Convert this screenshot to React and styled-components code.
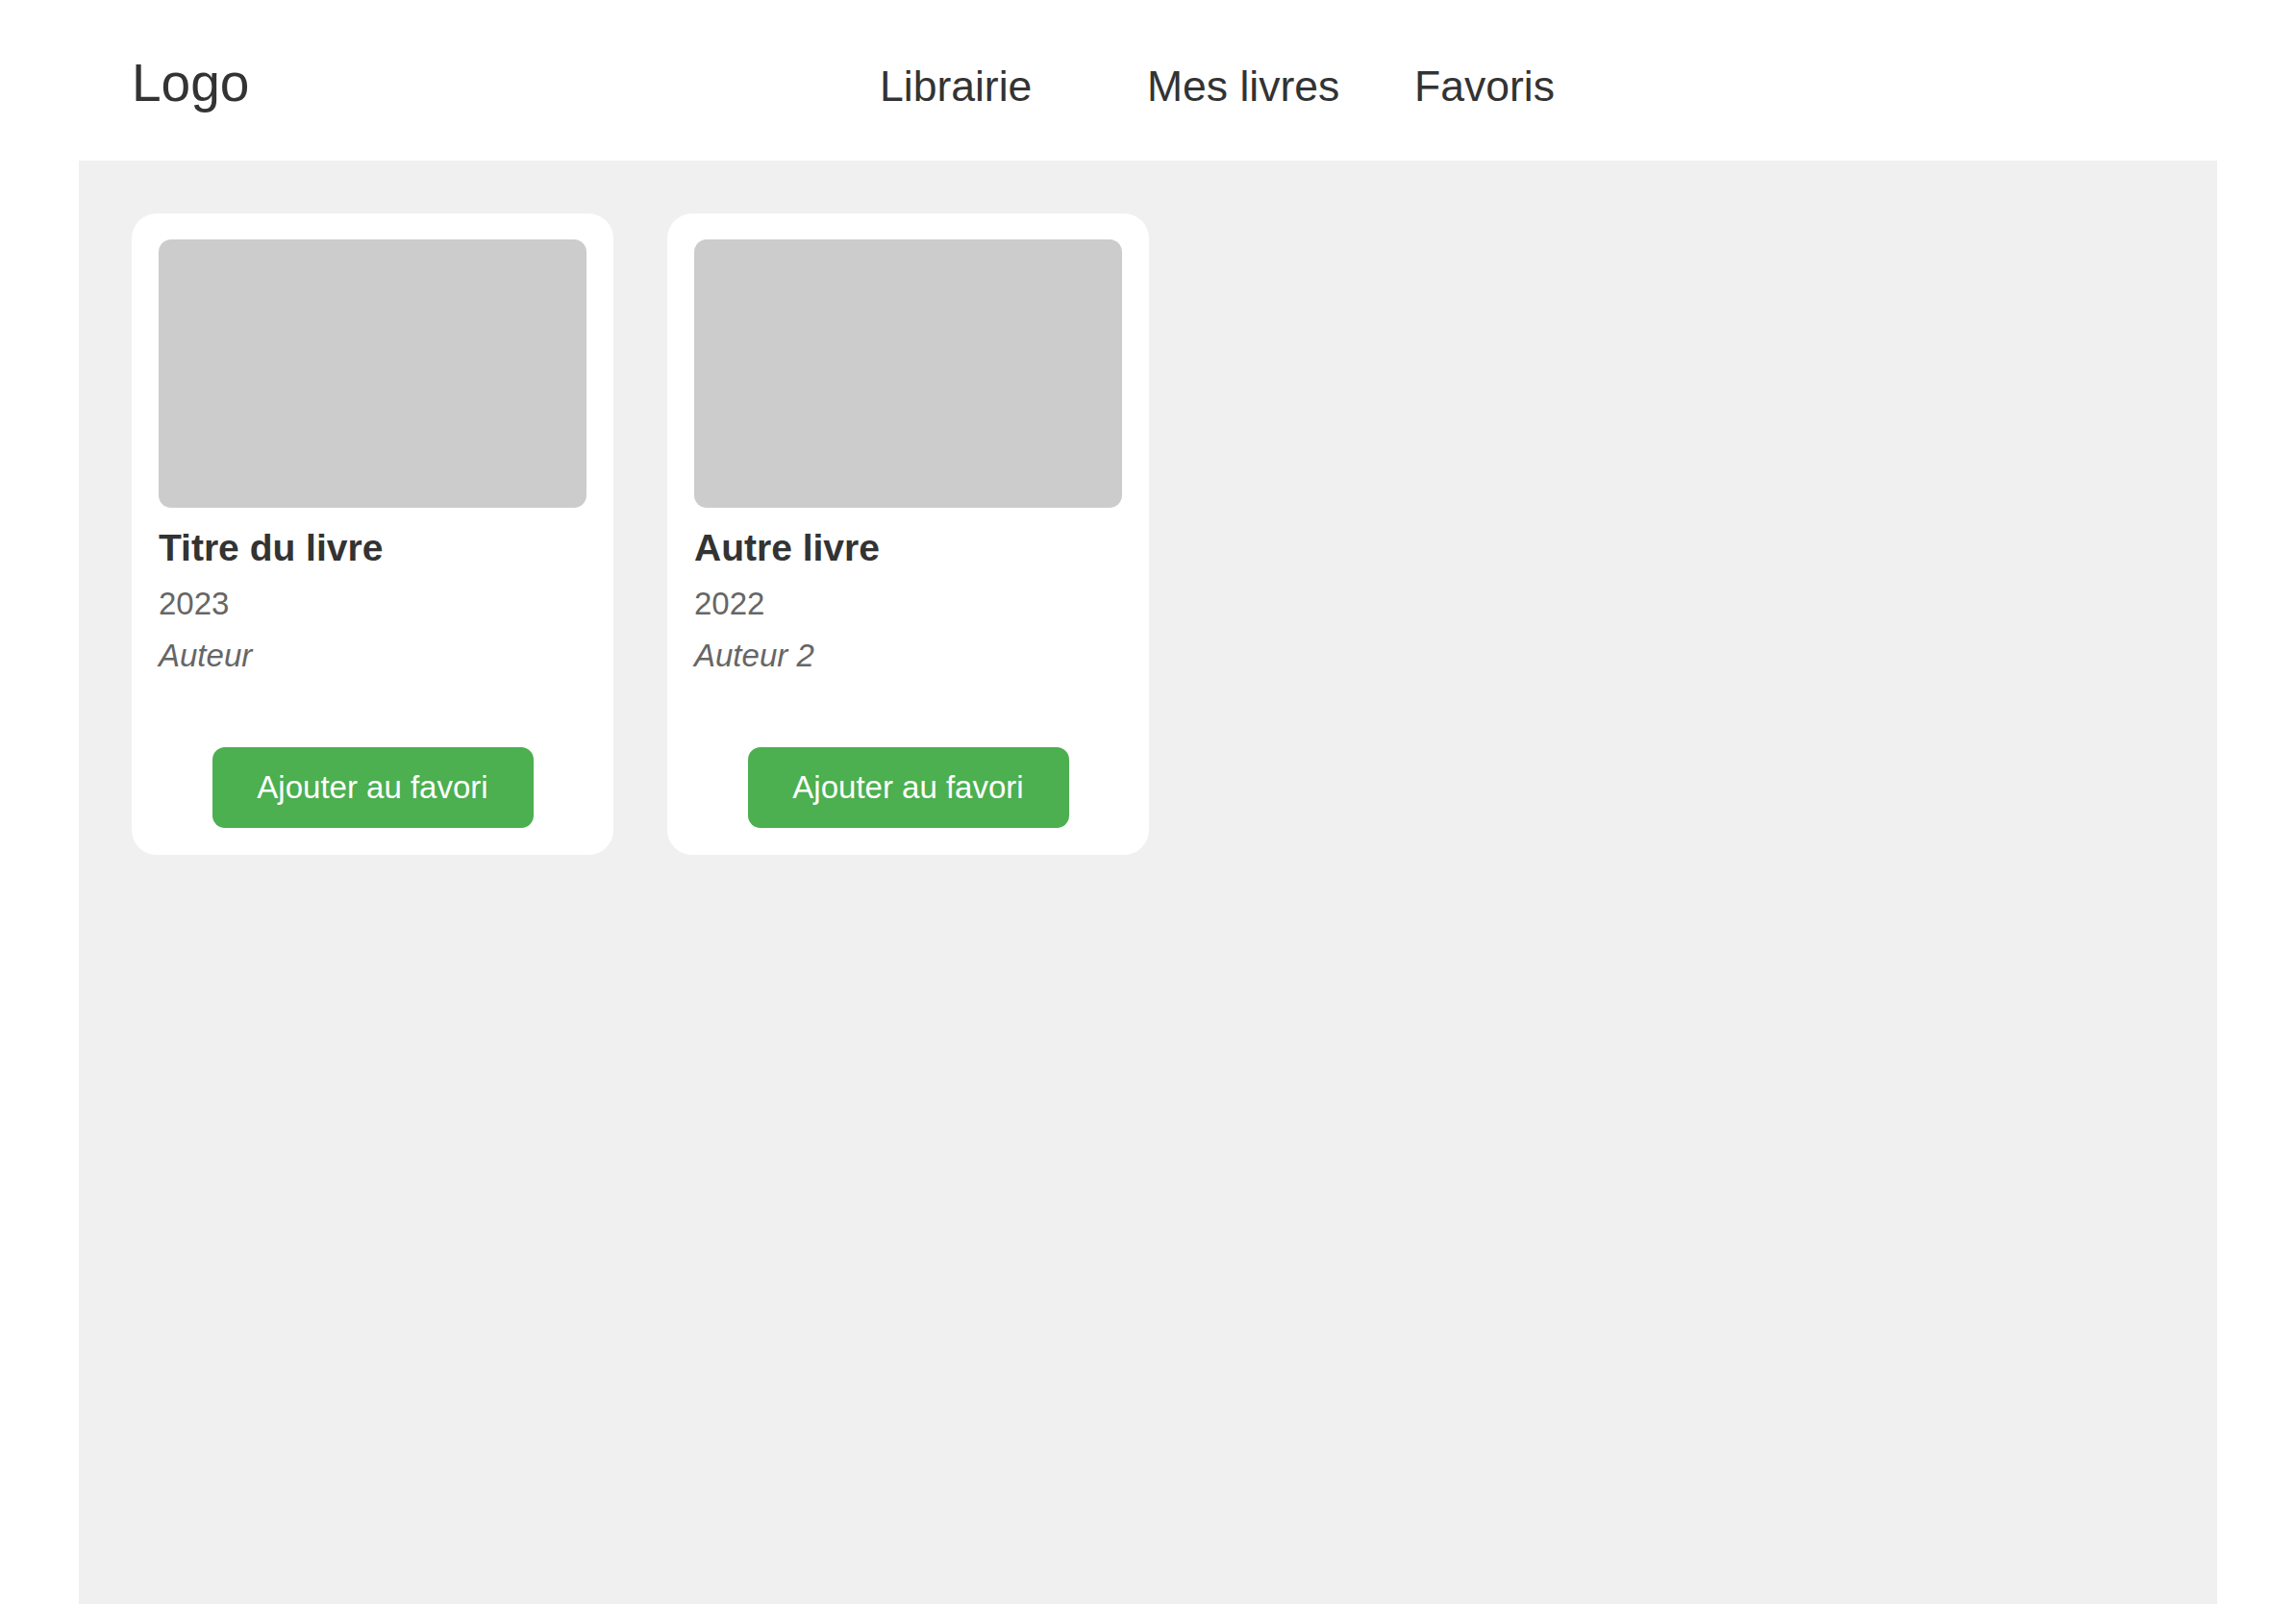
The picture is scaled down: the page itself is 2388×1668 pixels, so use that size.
import React from "react";
import styled, { createGlobalStyle } from "styled-components";

const GlobalStyle = createGlobalStyle`
  html, body {
    margin: 0;
    padding: 0;
    background: #fff;
  }
  body {
    font-family: "Liberation Sans", Arial, sans-serif;
    color: #333;
  }
  * {
    box-sizing: border-box;
  }
`;

const books = [
  { title: "Titre du livre", year: "2023", author: "Auteur" },
  { title: "Autre livre", year: "2022", author: "Auteur 2" },
];

const navItems = ["Librairie", "Mes livres", "Favoris"];

const Header = styled.header`
  display: grid;
  grid-template-columns: 778px repeat(3, 278px);
  align-items: baseline;
  height: 167px;
  padding: 55px 0 0 137px;
`;

const Logo = styled.div`
  font-size: 55px;
  line-height: 1.15;
  color: #333;
`;

const NavLink = styled.a`
  font-size: 44.5px;
  line-height: 1.15;
  color: #333;
  text-decoration: none;
  cursor: pointer;
`;

const Main = styled.main`
  margin: 0 82px;
  min-height: calc(100vh - 167px);
  background: #f0f0f0;
  padding: 55px;
  display: flex;
  align-items: flex-start;
  gap: 56px;
`;

const Card = styled.div`
  width: 501px;
  background: #fff;
  border-radius: 26px;
  padding: 27px 28px 28px;
  display: flex;
  flex-direction: column;
`;

const Cover = styled.div`
  height: 279px;
  background: #ccc;
  border-radius: 13px;
`;

const Title = styled.h3`
  margin: 20px 0 0;
  font-size: 39px;
  line-height: 1.15;
  font-weight: bold;
  color: #333;
`;

const Year = styled.p`
  margin: 16px 0 0;
  font-size: 33px;
  line-height: 1.15;
  color: #666;
`;

const Author = styled(Year)`
  margin-top: 16px;
  font-style: italic;
`;

const FavButton = styled.button`
  align-self: center;
  margin-top: 76px;
  width: 334px;
  height: 84px;
  border: none;
  border-radius: 13px;
  background: #4caf50;
  color: #fff;
  font-family: "Liberation Sans", Arial, sans-serif;
  font-size: 33px;
  cursor: pointer;
`;

const BookCard = ({ book }) => (
  <Card>
    <Cover />
    <Title>{book.title}</Title>
    <Year>{book.year}</Year>
    <Author>{book.author}</Author>
    <FavButton>Ajouter au favori</FavButton>
  </Card>
);

const App = () => {
  return (
    <>
      <GlobalStyle />
      <Header>
        <Logo>Logo</Logo>
        {navItems.map((item) => (
          <NavLink key={item}>{item}</NavLink>
        ))}
      </Header>
      <Main>
        {books.map((book) => (
          <BookCard key={book.title} book={book} />
        ))}
      </Main>
    </>
  );
};

export default App;
